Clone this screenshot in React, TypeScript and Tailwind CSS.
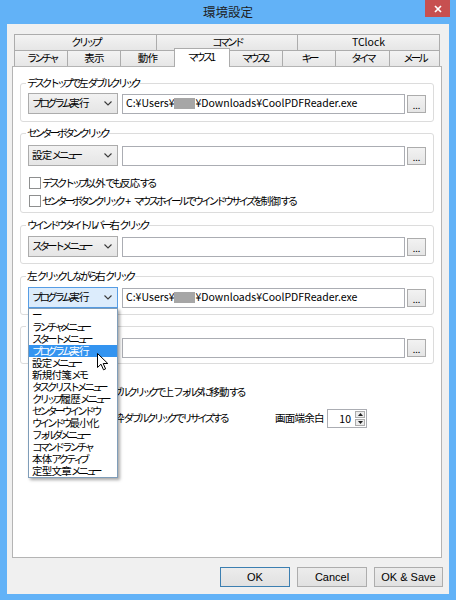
import React from "react";

// Meiryo UI style: proportional kana, full kanji
const SMALL = "ァィゥェォッャュョヮヵヶぁぃぅぇぉっゃゅょゎ";
const RUN = new RegExp(
  `[${SMALL}]+|(?:(?![${SMALL}])[\\u3040-\\u30FF])+|[\\u4E00-\\u9FFF々]+|[^\\u3040-\\u30FF\\u4E00-\\u9FFF々]+`,
  "g"
);

function JP({ t }: { t: string }) {
  const parts = t.match(RUN) || [];
  return (
    <>
      {parts.map((p, i) => {
        let cls = "";
        if (SMALL.includes(p[0])) cls = "tracking-[-4.5px]";
        else if (/[\u3040-\u30FF]/.test(p[0])) cls = "tracking-[-3px]";
        else if (/[\u4E00-\u9FFF々]/.test(p[0])) cls = "tracking-[-0.75px]";
        return (
          <span key={i} className={cls}>
            {p}
          </span>
        );
      })}
    </>
  );
}

const row1 = [
  { label: "クリップ", cls: "w-[143px] border-l" },
  { label: "コマンド", cls: "w-[141px]" },
  { label: "TClock", cls: "w-[142px]" },
];

const row2 = [
  { label: "ランチャ", cls: "w-[54px] border-l border-r", sel: false },
  { label: "表示", cls: "w-[53px] border-r", sel: false },
  { label: "動作", cls: "w-[53px]", sel: false },
  { label: "マウス1", cls: "w-[56px] border-l border-r", sel: true },
  { label: "マウス2", cls: "w-[53px] border-r", sel: false },
  { label: "キー", cls: "w-[53px] border-r", sel: false },
  { label: "タイマ", cls: "w-[54px] border-r", sel: false },
  { label: "メール", cls: "w-[50px] border-r", sel: false },
];

const menuItems = [
  "ー",
  "ランチャメニュー",
  "スタートメニュー",
  "プログラム実行",
  "設定メニュー",
  "新規付箋メモ",
  "タスクリストメニュー",
  "クリップ履歴メニュー",
  "センターウインドウ",
  "ウインドウ最小化",
  "フォルダメニュー",
  "コマンドランチャ",
  "本体アクティブ",
  "定型文章メニュー",
];

function Chevron() {
  return (
    <svg width="8" height="5" viewBox="0 0 8 5" className="shrink-0">
      <path d="M0.5 0.5 L4 4 L7.5 0.5" fill="none" stroke="#3a3a3a" strokeWidth="1.1" />
    </svg>
  );
}

function Select({ value, open }: { value: string; open?: boolean }) {
  return (
    <div
      className={`flex items-center justify-between w-[90px] h-[21px] shrink-0 pl-[3px] pr-[5px] border whitespace-nowrap ${
        open ? "border-[#569de5] bg-[#dcecfc]" : "border-[#acacac] bg-gradient-to-b from-[#f2f2f2] to-[#e5e5e5]"
      }`}
    >
      <span>
        <JP t={value} />
      </span>
      <Chevron />
    </div>
  );
}

function PathBox({ path }: { path?: boolean }) {
  return (
    <div className="flex-1 h-[20px] border border-[#abadb3] bg-white flex items-center pl-[3px] overflow-hidden whitespace-nowrap text-[10.5px]">
      {path && (
        <>
          C:¥Users¥
          <span className="inline-block w-[21px] h-[11px] bg-[#a6a6a6]" />
          ¥Downloads¥CoolPDFReader.exe
        </>
      )}
    </div>
  );
}

function Browse() {
  return (
    <div className="w-[19px] h-[18px] shrink-0 border border-[#acacac] bg-gradient-to-b from-[#f2f2f2] to-[#e5e5e5] flex justify-center items-end leading-[12px] text-[9px]">
      ...
    </div>
  );
}

function Group({ label, cls, children }: { label: string; cls: string; children: React.ReactNode }) {
  return (
    <fieldset className={`border border-[#dcdcdc] rounded-[3px] px-[7px] ${cls}`}>
      <legend className="-ml-[2px] px-[1px] h-[14px] leading-[14px] whitespace-nowrap">
        <JP t={label} />
      </legend>
      {children}
    </fieldset>
  );
}

function Check({ text }: { text: string }) {
  return (
    <div className="flex items-center h-[18px] whitespace-nowrap">
      <div className="ml-[1px] mr-[1px] w-[12px] h-[12px] border border-[#8e8f8f] bg-white shrink-0" />
      <span>
        <JP t={text} />
      </span>
    </div>
  );
}

function Cursor() {
  return (
    <svg width="12" height="18" viewBox="0 0 12 18" className="absolute left-[69px] top-[66px]">
      <path d="M0.5 0.5 L0.5 14.5 L4 11.2 L6.5 16.8 L8.6 15.9 L6.2 10.5 L10.8 10.5 Z" fill="#fff" stroke="#000" strokeWidth="1" strokeLinejoin="round" />
    </svg>
  );
}

export default function App() {
  return (
    <div className="w-[456px] h-[600px] bg-[#62b2f7] font-['Noto_Sans_CJK_JP','Noto_Sans_CJK_SC',sans-serif] text-[10.5px] text-black leading-none overflow-hidden">
      {/* Title bar */}
      <div className="relative h-[24px] flex items-center justify-center">
        <span className="text-[12.5px] text-[#1e1e1e]">環境設定</span>
        <div className="absolute top-0 right-[6px] w-[25px] h-[17px] bg-[#c75050] flex items-center justify-center">
          <svg width="8" height="8" viewBox="0 0 8 8">
            <path d="M1 1 L7 7 M7 1 L1 7" stroke="#fff" strokeWidth="1.7" />
          </svg>
        </div>
      </div>

      {/* Client */}
      <div className="mx-[7px] h-[570px] bg-[#f0f0f0] pt-[10px]">
        {/* Tabs */}
        <div className="ml-[7px] flex h-[16px]">
          {row1.map((t) => (
            <div
              key={t.label}
              className={`${t.cls} h-[16px] border-t border-r border-[#acacac] bg-gradient-to-b from-[#f3f3f3] to-[#e6e6e6] flex items-center justify-center`}
            >
              <JP t={t.label} />
            </div>
          ))}
        </div>
        <div className="ml-[7px] flex h-[16px] items-start">
          {row2.map((t) =>
            t.sel ? (
              <div
                key={t.label}
                className={`${t.cls} relative z-10 -mt-[2px] h-[19px] border-t border-[#acacac] bg-white flex items-center justify-center pb-[2px]`}
              >
                <JP t={t.label} />
              </div>
            ) : (
              <div
                key={t.label}
                className={`${t.cls} h-[16px] border-t border-[#acacac] bg-gradient-to-b from-[#f3f3f3] to-[#e6e6e6] flex items-center justify-center`}
              >
                <JP t={t.label} />
              </div>
            )
          )}
        </div>

        {/* Panel */}
        <div className="ml-[5px] w-[430px] h-[492px] border border-[#b4b4b4] bg-white px-[7px]">
          <Group label="デスクトップで左ダブルクリック" cls="mt-[9px] pb-[7px]">
            <div className="flex items-center pt-[3px]">
              <Select value="プログラム実行" />
              <div className="w-[4px]" />
              <PathBox path />
              <div className="w-[2px]" />
              <Browse />
            </div>
          </Group>

          <Group label="センターボタンクリック" cls="mt-[4px] pb-[2px]">
            <div className="flex items-center pt-[5px]">
              <Select value="設定メニュー" />
              <div className="w-[4px]" />
              <PathBox />
              <div className="w-[2px]" />
              <Browse />
            </div>
            <div className="mt-[8px]">
              <Check text="デスクトップ以外でも反応する" />
              <Check text="センターボタンクリック + マウスホイールでウインドウサイズを制御する" />
            </div>
          </Group>

          <Group label="ウインドウタイトルバー右クリック" cls="mt-[5px] pb-[6px]">
            <div className="flex items-center pt-[4px]">
              <Select value="スタートメニュー" />
              <div className="w-[4px]" />
              <PathBox />
              <div className="w-[2px]" />
              <Browse />
            </div>
          </Group>

          <Group label="左クリックしながら右クリック" cls="mt-[5px] pb-[6px]">
            <div className="flex items-center pt-[4px]">
              <div className="relative z-20">
                <Select value="プログラム実行" open />
                <div className="absolute left-0 top-[21px] w-[90px] border border-[#7f9db9] bg-white shadow-[2px_2px_3px_rgba(0,0,0,0.35)]">
                  {menuItems.map((m) => (
                    <div
                      key={m}
                      className={`h-[12px] leading-[12px] pl-[3px] whitespace-nowrap overflow-hidden ${
                        m === "プログラム実行" ? "bg-[#3394f0] text-white" : ""
                      }`}
                    >
                      <JP t={m} />
                    </div>
                  ))}
                </div>
                <Cursor />
              </div>
              <div className="w-[4px]" />
              <PathBox path />
              <div className="w-[2px]" />
              <Browse />
            </div>
          </Group>

          <Group label="フォルダ" cls="mt-[4px] pb-[5px]">
            <div className="flex items-center pt-[5px]">
              <div className="w-[90px] h-[20px] shrink-0" />
              <div className="w-[4px]" />
              <PathBox />
              <div className="w-[2px]" />
              <Browse />
            </div>
          </Group>

          <div className="ml-[8px] mt-[19px]">
            <Check text="フォルダの空白をダブルクリックで上フォルダに移動する" />
          </div>
          <div className="ml-[8px] mt-[8px] flex items-center h-[19px]">
            <div className="w-[247px] overflow-hidden">
              <Check text="ウインドウの外側の枠ダブルクリックでリサイズする" />
            </div>
            <span className="w-[52px] whitespace-nowrap">
              <JP t="画面端余白" />
            </span>
            <div className="flex w-[40px] h-[19px] border border-[#abadb3] bg-white">
              <div className="flex-1 text-right pr-[3px] leading-[17px]">10</div>
              <div className="flex flex-col w-[12px] p-[1px] gap-[1px]">
                <div className="flex-1 flex items-center justify-center border border-[#acacac] bg-[#ececec]">
                  <svg width="5" height="3" viewBox="0 0 5 3">
                    <path d="M2.5 0 L5 3 L0 3 Z" fill="#202020" />
                  </svg>
                </div>
                <div className="flex-1 flex items-center justify-center border border-[#acacac] bg-[#ececec]">
                  <svg width="5" height="3" viewBox="0 0 5 3">
                    <path d="M0 0 L5 0 L2.5 3 Z" fill="#202020" />
                  </svg>
                </div>
              </div>
            </div>
          </div>
        </div>

        {/* Buttons */}
        <div className="mt-[9px] flex justify-end gap-[7px] pr-[6px]">
          <button className="w-[70px] h-[20px] border border-[#3c7fb1] bg-gradient-to-b from-[#ececec] to-[#e1e1e1] text-[11px] font-['Liberation_Sans',sans-serif]">
            OK
          </button>
          <button className="w-[70px] h-[20px] border border-[#adadad] bg-gradient-to-b from-[#ececec] to-[#e1e1e1] text-[11px] font-['Liberation_Sans',sans-serif]">
            Cancel
          </button>
          <button className="w-[69px] h-[20px] border border-[#adadad] bg-gradient-to-b from-[#ececec] to-[#e1e1e1] text-[11px] font-['Liberation_Sans',sans-serif]">
            OK &amp; Save
          </button>
        </div>
      </div>
    </div>
  );
}
